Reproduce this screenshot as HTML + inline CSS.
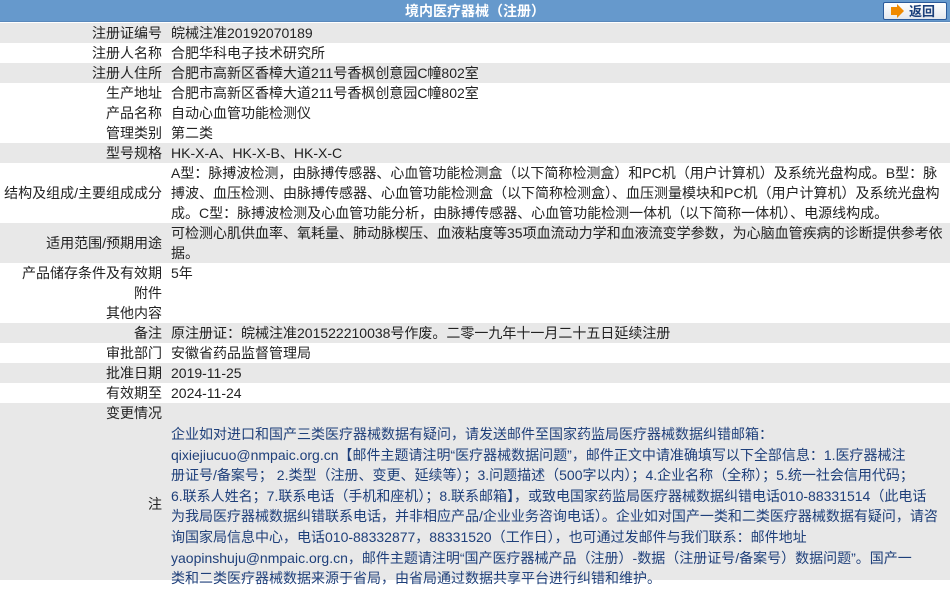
<!DOCTYPE html>
<html><head><meta charset="utf-8"><style>
*{margin:0;padding:0;box-sizing:border-box}
body{width:950px;height:580px;overflow:hidden;background:#fff;font-family:"Liberation Sans","Noto Sans CJK SC",sans-serif;font-size:14px;color:#222;position:relative}
.hd{position:absolute;left:0;top:0;width:950px;height:22px;background:#6699cc;border-bottom:1px solid #5a88bb;color:#fff;font-weight:bold;text-align:center;line-height:22px;font-size:14px}
.btn{position:absolute;left:883px;top:2px;width:64px;height:18px;border:1px solid #2a5a9a;border-radius:2px;background:linear-gradient(#ffffff,#e4e8ee);}
.btn .ar{position:absolute;left:7px;top:4px;width:6px;height:8px;background:#f08a00}
.btn .ar2{position:absolute;left:13px;top:1px;width:0;height:0;border-top:7px solid transparent;border-bottom:7px solid transparent;border-left:7px solid #f08a00}
.btn .t{position:absolute;left:25px;top:0;line-height:17px;font-weight:bold;color:#1a3f7a;font-size:13px}
.r{position:absolute;left:0;width:950px;line-height:20px}
.g{background:#e8e8e8}
.l{position:absolute;left:0;width:162px;text-align:right;white-space:nowrap}
.v{position:absolute;left:171px;white-space:nowrap}
.b{color:#1e3f7a}
</style></head><body>
<div class="hd">境内医疗器械（注册）</div>
<div class="btn"><div class="ar"></div><div class="ar2"></div><div class="t">返回</div></div>

<div class="r g" style="top:23px;height:20px"><div class="l">注册证编号</div><div class="v">皖械注准20192070189</div></div>
<div class="r" style="top:43px;height:20px"><div class="l">注册人名称</div><div class="v">合肥华科电子技术研究所</div></div>
<div class="r g" style="top:63px;height:20px"><div class="l">注册人住所</div><div class="v">合肥市高新区香樟大道211号香枫创意园C幢802室</div></div>
<div class="r" style="top:83px;height:20px"><div class="l">生产地址</div><div class="v">合肥市高新区香樟大道211号香枫创意园C幢802室</div></div>
<div class="r" style="top:103px;height:20px"><div class="l">产品名称</div><div class="v">自动心血管功能检测仪</div></div>
<div class="r" style="top:123px;height:20px"><div class="l">管理类别</div><div class="v">第二类</div></div>
<div class="r g" style="top:143px;height:20px"><div class="l">型号规格</div><div class="v">HK-X-A、HK-X-B、HK-X-C</div></div>
<div class="r" style="top:163px;height:60px"><div class="l" style="top:20px">结构及组成/主要组成成分</div><div class="v">A型：脉搏波检测，由脉搏传感器、心血管功能检测盒（以下简称检测盒）和PC机（用户计算机）及系统光盘构成。B型：脉<br>搏波、血压检测、由脉搏传感器、心血管功能检测盒（以下简称检测盒）、血压测量模块和PC机（用户计算机）及系统光盘构<br>成。C型：脉搏波检测及心血管功能分析，由脉搏传感器、心血管功能检测一体机（以下简称一体机）、电源线构成。</div></div>
<div class="r g" style="top:223px;height:40px"><div class="l" style="top:10px">适用范围/预期用途</div><div class="v">可检测心肌供血率、氧耗量、肺动脉楔压、血液粘度等35项血流动力学和血液流变学参数，为心脑血管疾病的诊断提供参考依<br>据。</div></div>
<div class="r" style="top:263px;height:20px"><div class="l">产品储存条件及有效期</div><div class="v">5年</div></div>
<div class="r" style="top:283px;height:20px"><div class="l">附件</div></div>
<div class="r" style="top:303px;height:20px"><div class="l">其他内容</div></div>
<div class="r g" style="top:323px;height:20px"><div class="l">备注</div><div class="v">原注册证：皖械注准201522210038号作废。二零一九年十一月二十五日延续注册</div></div>
<div class="r" style="top:343px;height:20px"><div class="l">审批部门</div><div class="v">安徽省药品监督管理局</div></div>
<div class="r g" style="top:363px;height:20px"><div class="l">批准日期</div><div class="v">2019-11-25</div></div>
<div class="r" style="top:383px;height:20px"><div class="l">有效期至</div><div class="v">2024-11-24</div></div>
<div class="r g" style="top:403px;height:20px"><div class="l">变更情况</div></div>
<div class="r g" style="top:423px;height:157px;line-height:20.6px"><div class="l" style="top:71px">注</div><div class="v b" style="top:1px">企业如对进口和国产三类医疗器械数据有疑问，请发送邮件至国家药监局医疗器械数据纠错邮箱：<br>qixiejiucuo@nmpaic.org.cn【邮件主题请注明“医疗器械数据问题”，邮件正文中请准确填写以下全部信息：1.医疗器械注<br>册证号/备案号； 2.类型（注册、变更、延续等）；3.问题描述（500字以内）；4.企业名称（全称）；5.统一社会信用代码；<br>6.联系人姓名；7.联系电话（手机和座机）；8.联系邮箱】，或致电国家药监局医疗器械数据纠错电话010-88331514（此电话<br>为我局医疗器械数据纠错联系电话，并非相应产品/企业业务咨询电话）。企业如对国产一类和二类医疗器械数据有疑问，请咨<br>询国家局信息中心，电话010-88332877，88331520（工作日），也可通过发邮件与我们联系：邮件地址<br>yaopinshuju@nmpaic.org.cn，邮件主题请注明“国产医疗器械产品（注册）-数据（注册证号/备案号）数据问题”。国产一<br>类和二类医疗器械数据来源于省局，由省局通过数据共享平台进行纠错和维护。</div></div>
</body></html>
